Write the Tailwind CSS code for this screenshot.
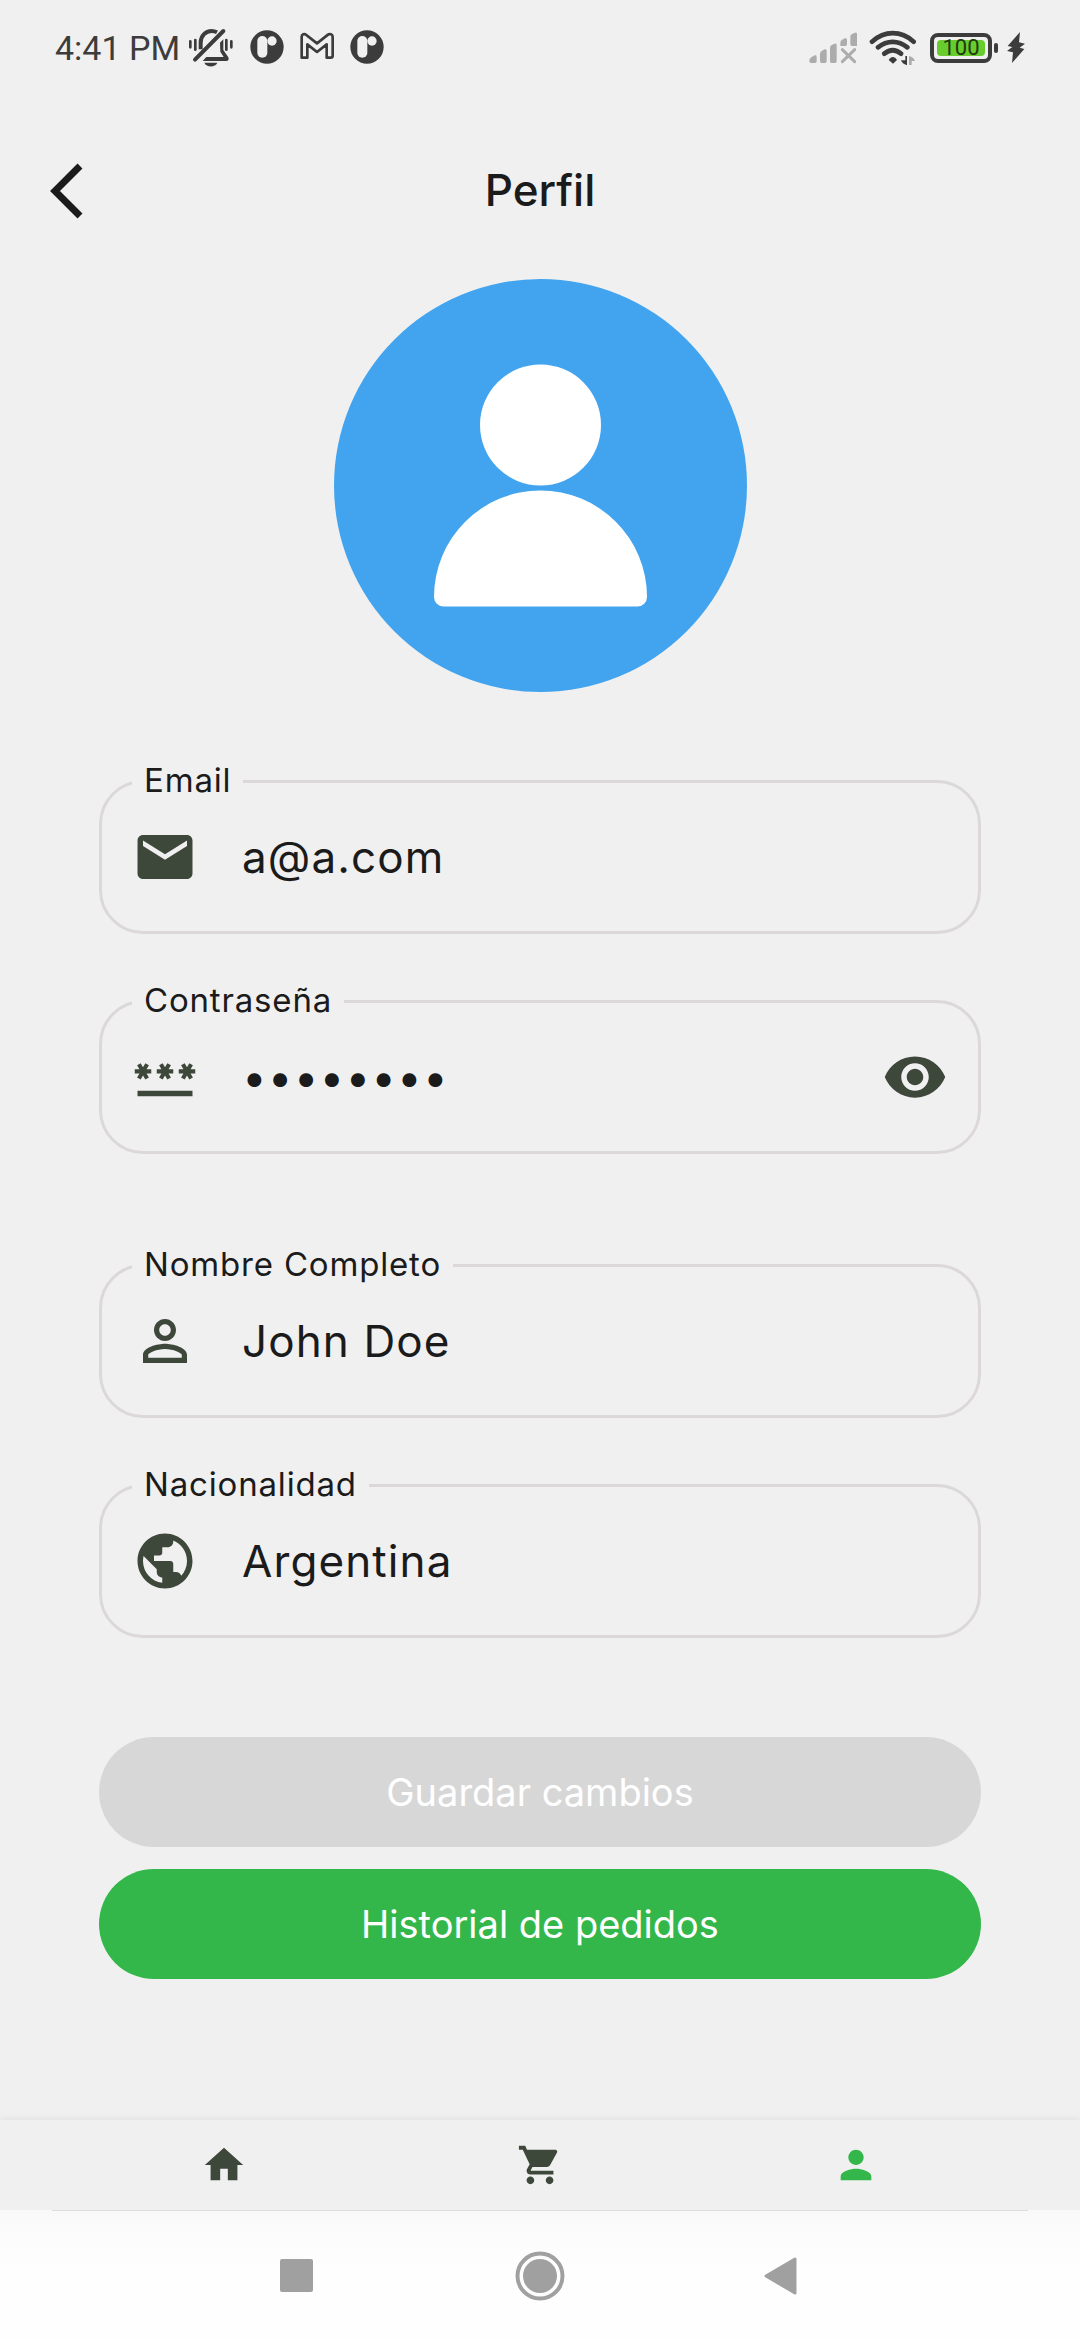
<!DOCTYPE html>
<html lang="es">
<head>
<meta charset="utf-8">
<meta name="viewport" content="width=device-width, initial-scale=1">
<title>Perfil</title>
<script src="https://cdn.jsdelivr.net/npm/@tailwindcss/browser@4"></script>
</head>
<body class="flex min-h-screen flex-col bg-[#f0f0f0] font-['Inter',sans-serif] text-[#1b1b1b]">

  <!-- Status bar -->
  <div class="flex h-24 items-center justify-between px-[55px] text-[#3c3c3c]">
    <div class="flex items-center gap-4">
      <span class="-mr-2 font-['Roboto',sans-serif] text-[34px] leading-10">4:41 PM</span>
      <svg class="h-10 w-[46px]" viewBox="444 54 138 120" fill="none" stroke="currentColor" stroke-linecap="round" aria-hidden="true">
        <path d="M482 118V98c0-20 14-35 33-35 7 0 12 2 16 4" stroke-width="12" stroke-linecap="butt"/>
        <path d="M540 98l10-10v32l15 22c3 6 0 11-6 11h-71l11-12h52l-10-16z" fill="currentColor" stroke="none"/>
        <path d="M465 149l85-86" stroke-width="12"/>
        <path d="M493 158h39c-6 15-33 15-39 0z" fill="currentColor" stroke="none"/>
        <path d="M451 94v18M466 90v29M559 90v29M574 94v18" stroke-width="8"/>
      </svg>
      <svg class="h-10 w-[34px]" viewBox="627 54 102 120" aria-hidden="true">
        <circle cx="678" cy="111" r="50" fill="#3c3c3c"/>
        <rect x="649" y="78" width="30" height="65" rx="15" fill="#f0f0f0"/>
        <circle cx="693" cy="93" r="14" fill="#f0f0f0"/>
      </svg>
      <svg class="h-10 w-[34px]" viewBox="777 54 102 120" fill="none" stroke="currentColor" stroke-width="8" stroke-linejoin="round" aria-hidden="true">
        <path d="M782 143V80c0-7 8-10 13-6l33 26 33-26c5-4 14-1 14 6v58c0 3-3 5-6 5h-12v-40l-29 23-29-23v40z"/>
      </svg>
      <svg class="h-10 w-[34px]" viewBox="627 54 102 120" aria-hidden="true">
        <circle cx="678" cy="111" r="50" fill="#3c3c3c"/>
        <rect x="649" y="78" width="30" height="65" rx="15" fill="#f0f0f0"/>
        <circle cx="693" cy="93" r="14" fill="#f0f0f0"/>
      </svg>
    </div>
    <div class="flex items-center gap-3">
      <svg class="h-10 w-12" viewBox="87 54 144 120" fill="#acacac" aria-hidden="true">
        <path d="M88 152q0-6 6-10l10-6q6-2 6 4v14q0 5-5 5H93q-5 0-5-5zM120 132q0-6 5-9l9-5q6-2 6 4v32q0 5-5 5h-10q-5 0-5-5zM150 114q0-6 5-9l9-4q6-2 6 4v49q0 5-5 5h-10q-5 0-5-5zM181 98q0-6 5-9l9-4q6-2 6 4v14q0 5-5 5h-15zM211 80q0-6 5-8l9-4q6-2 6 4v36h-15q-5 0-5-5z"/>
        <path d="M187 119l37 36M224 119l-37 36" stroke="#acacac" stroke-width="9" stroke-linecap="round"/>
      </svg>
      <svg class="h-10 w-[47px]" viewBox="267 54 141 120" fill="none" stroke="currentColor" stroke-width="14" stroke-linecap="round" aria-hidden="true">
        <path d="M276 95c38-34 87-34 125 0M294 112c27-22 61-22 88 0M313 131c16-13 34-13 50 0"/>
        <path d="M326 150c7-12 18-12 25 0l-12 11z" fill="currentColor" stroke="none"/>
        <path d="M376 138h5v28c-10-3-16-9-18-15h13z" fill="currentColor" stroke="none"/>
        <path d="M387 138c9 2 16 8 18 15h-10v12h-8z" fill="#acacac" stroke="none"/>
      </svg>
      <div class="ml-[2px] flex items-center gap-[2px]">
        <div class="flex h-[30px] w-[62px] items-center justify-center rounded-lg border-4 border-[#3c3c3c]">
          <span class="flex h-4 w-12 items-center justify-center rounded-sm bg-[#68cc2c] font-['Roboto',sans-serif] text-[22px] leading-4 text-[#1f3a10]">100</span>
        </div>
        <div class="h-[10px] w-1 rounded-full bg-[#3c3c3c]"></div>
        <svg class="ml-[7px] h-10 w-[18px]" viewBox="681 54 54 120" fill="currentColor" aria-hidden="true">
          <path d="M720 66l-37 42 14 3-16 12 18 4-3 32 37-42-14-4 16-12-18-4z"/>
        </svg>
      </div>
    </div>
  </div>

  <header class="mt-7 grid h-[132px] grid-cols-3 items-center px-11">
    <button type="button" aria-label="Volver" class="justify-self-start">
      <svg class="h-[66px] w-11" viewBox="0 0 44 66" fill="none" stroke="currentColor" stroke-width="7" aria-hidden="true">
        <path d="M36 9L11 34l25 25"/>
      </svg>
    </button>
    <h1 class="text-center text-[44px] leading-[66px] font-medium">Perfil</h1>
  </header>

  <main class="flex flex-1 flex-col px-[99px] pt-[23px]">
    <svg class="size-[413px] self-center" viewBox="0 0 413 413" role="img" aria-label="Foto de perfil">
      <circle cx="206.500" cy="206.500" r="206.500" fill="#42a4ee"/>
      <g fill="#fff">
        <circle cx="206.500" cy="146" r="60.500"/>
        <path d="M100 318a106.500 106.500 0 0 1 213 0a9.500 9.500 0 0 1-9.500 9.500h-194a9.500 9.500 0 0 1-9.500-9.500z"/>
      </g>
    </svg>

    <form class="mt-[88px] flex flex-col">
      <div class="relative flex h-[154px] items-center gap-11 rounded-[44px] border-3 border-[#dcd8d9] px-[30px]">
        <label for="email" class="absolute -top-[25px] left-[30px] bg-[#f0f0f0] px-3 text-[33px] leading-[44px] tracking-wide">Email</label>
        <svg class="size-[66px] shrink-0" viewBox="0 0 24 24" fill="#3e483a" aria-hidden="true"><path d="M20 4H4c-1.100 0-1.990.9-1.990 2L2 18c0 1.100.9 2 2 2h16c1.100 0 2-.9 2-2V6c0-1.100-.9-2-2-2zm0 4l-8 5-8-5V6l8 5 8-5v2z"/></svg>
        <input id="email" type="email" value="a@a.com" class="min-w-0 flex-1 bg-transparent text-[44px] leading-[66px] tracking-wide outline-none">
      </div>

      <div class="relative mt-[66px] flex h-[154px] items-center gap-11 rounded-[44px] border-3 border-[#dcd8d9] px-[30px]">
        <label for="password" class="absolute -top-[25px] left-[30px] bg-[#f0f0f0] px-3 text-[33px] leading-[44px] tracking-wide">Contraseña</label>
        <svg class="size-[66px] shrink-0" viewBox="0 0 24 24" fill="#3e483a" aria-hidden="true"><path d="M2 17h20v2H2v-2zm1.150-4.050L4 11.470l.85 1.480 1.300-.75-.85-1.480H7v-1.500H5.300l.85-1.470L4.850 7 4 8.470 3.150 7l-1.300.75.85 1.470H1v1.500h1.700l-.85 1.480 1.300.75zm6.700-.75l1.300.75.85-1.480.85 1.480 1.300-.75-.85-1.480H15v-1.500h-1.700l.85-1.470-1.300-.75L12 8.470 11.150 7l-1.300.75.85 1.470H9v1.500h1.700l-.85 1.480zM23 9.220h-1.700l.85-1.470-1.300-.75L20 8.470 19.150 7l-1.300.75.85 1.470H17v1.500h1.700l-.85 1.480 1.300.75.85-1.480.85 1.480 1.300-.75-.85-1.480H23v-1.500z"/></svg>
        <input id="password" type="password" value="12345678" class="min-w-0 flex-1 bg-transparent text-[44px] leading-[66px] tracking-wide outline-none">
        <button type="button" aria-label="Mostrar contraseña" class="shrink-0">
          <svg class="size-[66px]" viewBox="0 0 24 24" fill="#3e483a" aria-hidden="true"><path d="M12 4.500C7 4.500 2.730 7.610 1 12c1.730 4.390 6 7.500 11 7.500s9.270-3.110 11-7.500c-1.730-4.390-6-7.500-11-7.500zM12 17c-2.760 0-5-2.240-5-5s2.240-5 5-5 5 2.240 5 5-2.240 5-5 5zm0-8c-1.660 0-3 1.340-3 3s1.340 3 3 3 3-1.340 3-3-1.340-3-3-3z"/></svg>
        </button>
      </div>

      <div class="relative mt-[110px] flex h-[154px] items-center gap-11 rounded-[44px] border-3 border-[#dcd8d9] px-[30px]">
        <label for="name" class="absolute -top-[25px] left-[30px] bg-[#f0f0f0] px-3 text-[33px] leading-[44px] tracking-wide">Nombre Completo</label>
        <svg class="size-[66px] shrink-0" viewBox="0 0 24 24" fill="#3e483a" aria-hidden="true"><path d="M12 5.900c1.160 0 2.100.94 2.100 2.100s-.94 2.100-2.100 2.100S9.900 9.160 9.900 8s.94-2.100 2.100-2.100m0 9c2.970 0 6.100 1.460 6.100 2.100v1.100H5.900V17c0-.64 3.130-2.100 6.100-2.100M12 4C9.790 4 8 5.790 8 8s1.790 4 4 4 4-1.790 4-4-1.790-4-4-4zm0 9c-2.670 0-8 1.340-8 4v3h16v-3c0-2.660-5.330-4-8-4z"/></svg>
        <input id="name" type="text" value="John Doe" class="min-w-0 flex-1 bg-transparent text-[44px] leading-[66px] tracking-wide outline-none">
      </div>

      <div class="relative mt-[66px] flex h-[154px] items-center gap-11 rounded-[44px] border-3 border-[#dcd8d9] px-[30px]">
        <label for="country" class="absolute -top-[25px] left-[30px] bg-[#f0f0f0] px-3 text-[33px] leading-[44px] tracking-wide">Nacionalidad</label>
        <svg class="size-[66px] shrink-0" viewBox="0 0 24 24" fill="#3e483a" aria-hidden="true"><path d="M12 2C6.480 2 2 6.480 2 12s4.480 10 10 10 10-4.480 10-10S17.520 2 12 2zm-1 17.930c-3.950-.49-7-3.850-7-7.930 0-.62.08-1.210.21-1.790L9 15v1c0 1.100.9 2 2 2v1.930zm6.900-2.540c-.26-.81-1-1.390-1.900-1.390h-1v-3c0-.55-.45-1-1-1H8v-2h2c.55 0 1-.45 1-1V7h2c1.100 0 2-.9 2-2v-.41c2.930 1.190 5 4.060 5 7.410 0 2.080-.8 3.970-2.100 5.390z"/></svg>
        <input id="country" type="text" value="Argentina" class="min-w-0 flex-1 bg-transparent text-[44px] leading-[66px] tracking-wide outline-none">
      </div>

      <div class="mt-[99px] flex flex-col gap-[22px] text-[38px] leading-[55px] text-white">
        <button type="submit" disabled class="h-[110px] rounded-full bg-[#d7d7d7]">Guardar cambios</button>
        <button type="button" class="h-[110px] rounded-full bg-[#34b74a]">Historial de pedidos</button>
      </div>
    </form>
  </main>

  <!-- App navigation -->
  <nav class="grid h-[90px] grid-cols-3 items-center justify-items-center bg-[#f0f0f0] px-[66px] text-[#3e483a] shadow-[0_-1px_8px_rgba(0,0,0,0.07)]">
    <a href="#inicio" aria-label="Inicio"><svg class="size-[46px]" viewBox="0 0 24 24" fill="currentColor" aria-hidden="true"><path d="M10 20v-6h4v6h5v-8h3L12 3 2 12h3v8z"/></svg></a>
    <a href="#carrito" aria-label="Carrito"><svg class="size-[46px]" viewBox="0 0 24 24" fill="currentColor" aria-hidden="true"><path d="M7 18c-1.100 0-1.990.9-1.990 2S5.900 22 7 22s2-.9 2-2-.9-2-2-2zM1 2v2h2l3.600 7.590-1.350 2.450c-.16.28-.25.61-.25.96 0 1.100.9 2 2 2h12v-2H7.420c-.14 0-.25-.11-.25-.25l.03-.12.9-1.630h7.450c.75 0 1.410-.41 1.750-1.030l3.580-6.490c.08-.14.12-.31.12-.48 0-.55-.45-1-1-1H5.210l-.94-2H1zm16 16c-1.100 0-1.990.9-1.990 2s.89 2 1.990 2 2-.9 2-2-.9-2-2-2z"/></svg></a>
    <a href="#perfil" aria-label="Perfil" aria-current="page" class="text-[#34b74a]"><svg class="size-[46px]" viewBox="0 0 24 24" fill="currentColor" aria-hidden="true"><path d="M12 12c2.210 0 4-1.790 4-4s-1.790-4-4-4-4 1.790-4 4 1.790 4 4 4zm0 2c-2.670 0-8 1.340-8 4v2h16v-2c0-2.660-5.330-4-8-4z"/></svg></a>
  </nav>

  <!-- System navigation -->
  <div class="bg-[linear-gradient(#f9f9f9,#fefefe_56px)]">
    <div class="mx-[52px] h-px bg-[#dddddd]"></div>
    <div class="grid h-[129px] grid-cols-3 items-center justify-items-center px-[174px] text-[#a0a0a0]">
      <button type="button" aria-label="Recientes"><svg class="size-[50px]" viewBox="0 0 50 50" fill="currentColor" aria-hidden="true"><rect x="9" y="8" width="33" height="33" rx="2"/></svg></button>
      <button type="button" aria-label="Inicio del sistema"><svg class="size-[50px]" viewBox="0 0 50 50" aria-hidden="true"><circle cx="25" cy="25" r="22.500" fill="none" stroke="currentColor" stroke-width="4"/><circle cx="25" cy="25" r="17" fill="currentColor"/></svg></button>
      <button type="button" aria-label="Atrás"><svg class="size-[50px]" viewBox="0 0 50 50" fill="currentColor" stroke="currentColor" stroke-width="3" stroke-linejoin="round" aria-hidden="true"><path d="M7 25L36 8v34z"/></svg></button>
    </div>
  </div>
</body>
</html>
